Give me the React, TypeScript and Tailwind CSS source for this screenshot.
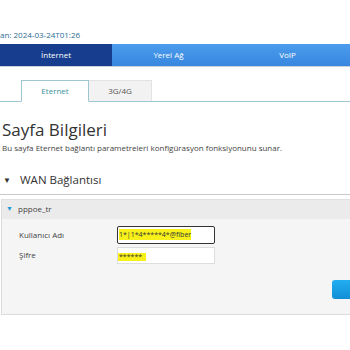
import React from "react";

const font = { fontFamily: '"Open Sans", "Noto Sans", sans-serif' };

export default function App() {
  return (
    <div className="w-[350px] h-[350px] overflow-hidden bg-white text-[#333]" style={font}>
      {/* Timestamp */}
      <div className="h-[44px] flex items-end pb-[5px]">
        <span className="text-[8px] leading-none text-[#2b6c93]">an: 2024-03-24T01:26</span>
      </div>

      {/* Main nav */}
      <div className="flex h-[23px] border-b border-[#c9d3de] text-[8px] text-white">
        <div className="w-[112px] flex items-center justify-center bg-[#173e8e]">İnternet</div>
        <div className="w-[113px] flex items-center justify-center bg-gradient-to-b from-[#4b9cec] to-[#3787e0]">Yerel Ağ</div>
        <div className="flex-1 flex items-center justify-center bg-gradient-to-b from-[#4b9cec] to-[#3787e0]">VoIP</div>
      </div>

      {/* Sub tabs */}
      <div className="mt-[13px] flex items-end h-[22px] border-b border-[#9cc7cf] pl-[21px]">
        <div className="w-[68px] h-[22px] -mb-px flex items-center justify-center bg-white border border-[#9cc7cf] border-b-white text-[8px] text-[#3a8fa0]">
          Eternet
        </div>
        <div className="w-[63px] h-[21px] flex items-center justify-center bg-[#f2f2f2] border-r border-t border-[#e3e3e3] text-[8px] text-[#555]">
          3G/4G
        </div>
      </div>

      {/* Page info */}
      <div className="pl-[2px]">
        <div className="mt-[19px] text-[17px] leading-none text-[#333]">Sayfa Bilgileri</div>
        <div className="mt-[6px] text-[8px] leading-none text-[#444]">
          Bu sayfa Eternet bağlantı parametreleri konfigürasyon fonksiyonunu sunar.
        </div>
        <div className="mt-[22px] flex items-center text-[11.5px] leading-none text-[#333]">
          <span className="text-[8px] w-[18px] pl-[1px]">▼</span>
          <span>WAN Bağlantısı</span>
        </div>
      </div>
      <div className="mt-[8px] border-b border-[#c8c8c8]" />

      {/* WAN panel */}
      <div className="mt-[4px] ml-[1px] border-l border-b border-[#dcdcdc] bg-[#f5f5f5] h-[116px]">
        <div className="h-[20px] flex items-center bg-[#ebebeb] border-t border-[#e0e0e0] text-[8px] text-[#444]">
          <span className="text-[7px] text-[#2a9ad8] w-[16px] pl-[4px]">▼</span>
          <span>pppoe_tr</span>
        </div>
        <div className="pl-[17px] pt-[7px] flex flex-col gap-[3px] text-[8px] text-[#444]">
          <div className="flex items-center h-[18px]">
            <span className="w-[98px]">Kullanıcı Adı</span>
            <div className="w-[98px] h-[18px] flex items-center bg-white border border-[#333] rounded-[2px] px-[1px]">
              <span className="bg-[#f7f01a] text-[#333] text-[7px] leading-[11px]">1*|1*4*****4*@fiber</span>
            </div>
          </div>
          <div className="flex items-center h-[17px]">
            <span className="w-[98px]">Şifre</span>
            <div className="w-[98px] h-[17px] flex items-end bg-white border border-[#ddd] pb-[2px]">
              <span className="bg-[#f7f01a] text-[#333] text-[7px] leading-[8px] w-[28px] pl-[1px]">******</span>
            </div>
          </div>
        </div>
        <div className="flex justify-end mt-[16px]">
          <div className="w-[18px] h-[19px] rounded-l-[3px] bg-gradient-to-b from-[#22aef0] to-[#128fd6]" />
        </div>
      </div>
    </div>
  );
}
